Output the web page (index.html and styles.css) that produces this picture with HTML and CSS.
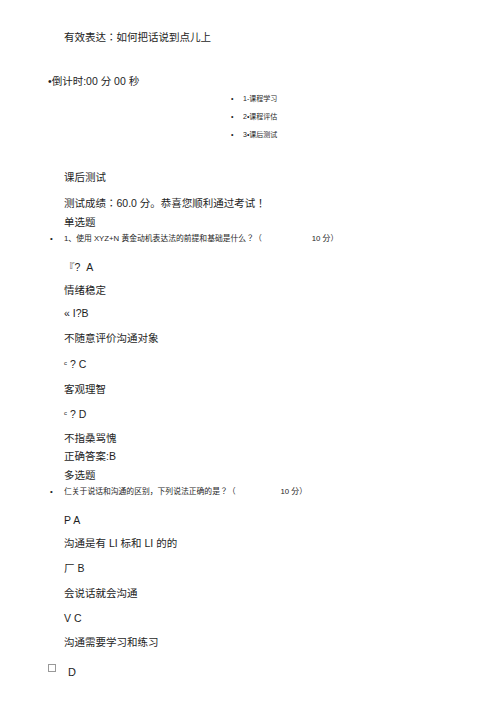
FILE: index.html
```html
<!DOCTYPE html>
<html lang="ja">
<head>
<meta charset="utf-8">
<link rel="stylesheet" href="styles.css">
</head>
<body>
<div class="page">
  <div class="line t first">有效表达：如何把话说到点儿上</div>
  <div class="line countdown g30">•倒计时:00 分 00 秒</div>
  <ul class="nav">
    <li>1-课程学习</li>
    <li>2•课程评估</li>
    <li>3•课后测试</li>
  </ul>
  <div class="line t g30">课后测试</div>
  <div class="line t g12">测试成绩：60.0 分。恭喜您顺利通过考试！</div>
  <div class="line t g5">单选题</div>
  <div class="q g5"><span class="dot">•</span><span class="qt">1、使用 XYZ+N 黄金动机表达法的前提和基础是什么？（</span><span class="score s1">10 分）</span></div>
  <div class="line t g16">『? &nbsp;A</div>
  <div class="line t g9">情绪稳定</div>
  <div class="line t g9">« I?B</div>
  <div class="line t g11">不随意评价沟通对象</div>
  <div class="line t g12"><sup class="c">c</sup> ? C</div>
  <div class="line t g11">客观理智</div>
  <div class="line t g11"><sup class="c">c</sup> ? D</div>
  <div class="line t g10">不指桑骂愧</div>
  <div class="line t g4">正确答案:B</div>
  <div class="line t g5">多选题</div>
  <div class="q g5"><span class="dot">•</span><span class="qt">仁关于说话和沟通的区别，下列说法正确的是？（</span><span class="score s2">10 分）</span></div>
  <div class="line t g16">P A</div>
  <div class="line t g9">沟通是有 LI 标和 LI 的的</div>
  <div class="line t g11">厂 B</div>
  <div class="line t g11">会说话就会沟通</div>
  <div class="line t g11">V C</div>
  <div class="line t g10">沟通需要学习和练习</div>
  <div class="last g14"><span class="box"></span><span class="dl">D</span></div>
</div>
</body>
</html>
```
FILE: styles.css
```css
html, body { margin: 0; padding: 0; background: #fff; }
body {
  font-family: "Liberation Sans", "Noto Sans CJK JP", sans-serif;
  color: #1e1e1e;
}
.page { padding-left: 64px; }
.first { margin-top: 30px; }
.line { height: 14px; line-height: 14px; font-size: 10.5px; white-space: nowrap; }
.countdown { margin-left: -16px; }
.g4 { margin-top: 4px; } .g5 { margin-top: 5px; } .g9 { margin-top: 9px; }
.g10 { margin-top: 10px; } .g11 { margin-top: 11px; } .g12 { margin-top: 12px; }
.g14 { margin-top: 14px; } .g16 { margin-top: 16px; } .g30 { margin-top: 30px; }
.nav { list-style: none; margin: 6px 0 0 0; padding: 0 0 0 167px; }
.nav li { position: relative; height: 10px; line-height: 10px; font-size: 7px; padding-left: 12px; margin-bottom: 8px; }
.nav li:last-child { margin-bottom: 0; }
.nav li::before { content: "•"; position: absolute; left: 0; top: 0; }
.q { display: flex; height: 10px; line-height: 10px; font-size: 7.8px; white-space: nowrap; margin-left: -14px; }
.dot { width: 14px; }
.s1 { margin-left: 50px; }
.s2 { margin-left: 45px; }
.c { font-size: 6px; vertical-align: 3px; line-height: 0; }
.last { display: flex; align-items: center; height: 14px; margin-left: -16px; font-size: 11px; }
.box { width: 8px; height: 8px; border: 1px solid #999; box-sizing: border-box; margin-top: -4px; }
.dl { margin-left: 12px; margin-top: 4px; }
```
